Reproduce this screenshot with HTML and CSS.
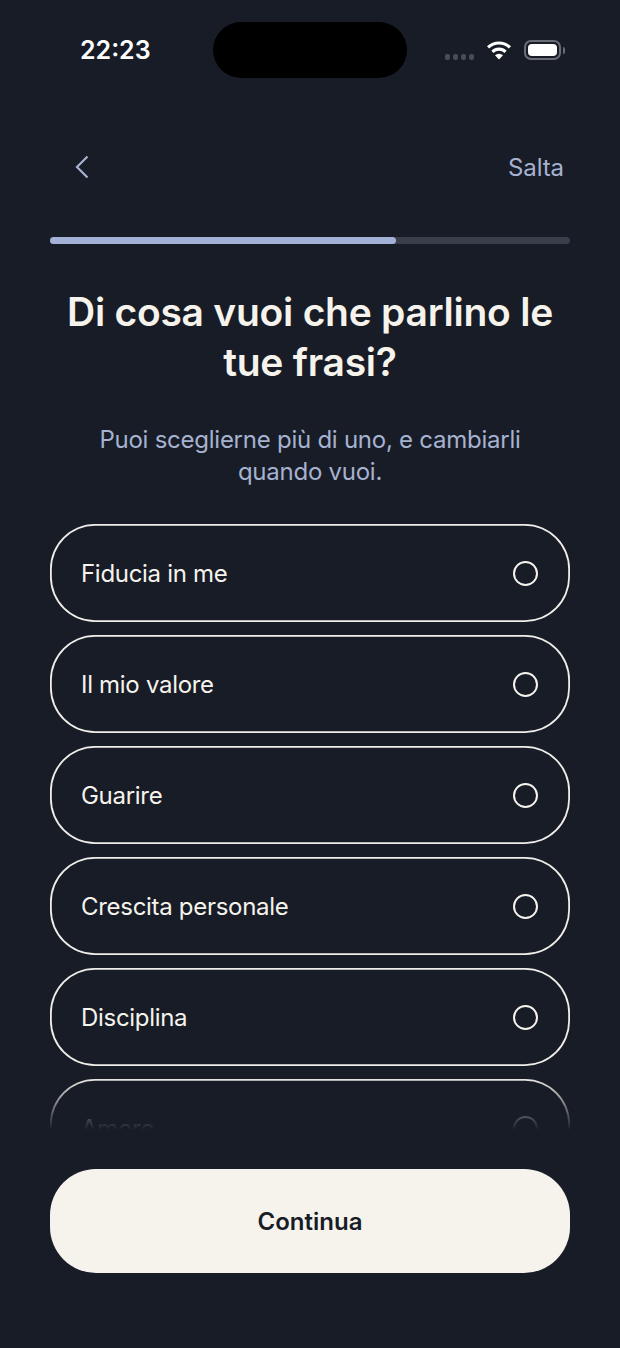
FILE: index.html
```html
<!DOCTYPE html>
<html lang="it">
  <head>
    <meta charset="UTF-8" />
    <meta name="viewport" content="width=device-width, initial-scale=1.0" />
    <title>Di cosa vuoi che parlino le tue frasi?</title>
    <link rel="stylesheet" href="styles.css">
  </head>
  <body>
    <div class="screen">
      <div class="status-bar">
        <span class="time">22:23</span>
        <div class="island"></div>
        <div class="status-icons">
          <div class="signal"><i></i><i></i><i></i><i></i></div>
          <svg class="wifi" width="26" height="20" viewBox="0 0 28 22">
            <path d="M2 8.2a17 17 0 0 1 24 0" fill="none" stroke="#fff" stroke-width="3.4" />
            <path d="M6.8 13a10.2 10.2 0 0 1 14.4 0" fill="none" stroke="#fff" stroke-width="3.4" />
            <path d="M14 21.5l-4.4-4.6a6.2 6.2 0 0 1 8.8 0z" fill="#fff" />
          </svg>
          <div class="battery"><div class="battery-level"></div></div>
          <div class="battery-cap"></div>
        </div>
      </div>

      <div class="nav">
        <button class="back-button" aria-label="Indietro">
          <svg width="14" height="24" viewBox="0 0 14 24">
            <path d="M12.5 1.5L2 12l10.5 10.5" fill="none" stroke="#a6b2d0" stroke-width="2.2" />
          </svg>
        </button>
        <span class="skip">Salta</span>
      </div>

      <div class="progress"><div class="progress-fill"></div></div>

      <h1 class="title">Di cosa vuoi che parlino le tue frasi?</h1>
      <p class="subtitle">Puoi sceglierne più di uno, e cambiarli quando vuoi.</p>

      <div class="options">
        <div class="option"><span>Fiducia in me</span><div class="radio"></div></div>
        <div class="option"><span>Il mio valore</span><div class="radio"></div></div>
        <div class="option"><span>Guarire</span><div class="radio"></div></div>
        <div class="option"><span>Crescita personale</span><div class="radio"></div></div>
        <div class="option"><span>Disciplina</span><div class="radio"></div></div>
        <div class="option"><span>Amore</span><div class="radio"></div></div>
        <div class="options-fade"></div>
      </div>

      <button class="continue-button">Continua</button>
    </div>
  </body>
</html>
```

FILE: styles.css
```css
* {
  box-sizing: border-box;
}

body {
  margin: 0;
  background-color: #171c27;
  font-family: Inter, "Noto Sans", sans-serif;
}

.screen {
  display: flex;
  flex-direction: column;
  width: 620px;
  height: 1348px;
  padding: 0 50px;
  overflow: hidden;
}

.status-bar {
  display: flex;
  align-items: center;
  height: 56px;
  margin-top: 22px;
  padding-left: 30px;
}

.time {
  flex: none;
  width: 133px;
  font-size: 25px;
  font-weight: 600;
  color: #fff;
}

.island {
  flex: none;
  width: 194px;
  height: 56px;
  margin-right: 38px;
  border-radius: 28px;
  background-color: #000;
}

.status-icons {
  display: flex;
  align-items: center;
}

.signal {
  display: flex;
  gap: 3px;
  margin: 14px 12px 0 0;
}

.signal i {
  width: 5px;
  height: 6px;
  border-radius: 2px;
  background-color: #484c56;
}

.wifi {
  margin-right: 12px;
}

.battery {
  width: 37px;
  height: 20px;
  padding: 2px;
  border: 2px solid #6a6d76;
  border-radius: 7px;
}

.battery-level {
  height: 100%;
  border-radius: 4px;
  background-color: #fff;
}

.battery-cap {
  width: 2px;
  height: 7px;
  margin-left: 2px;
  border-radius: 0 2px 2px 0;
  background-color: #6a6d76;
}

.nav {
  display: flex;
  align-items: center;
  justify-content: space-between;
  height: 40px;
  margin-top: 69px;
  padding: 0 6px 0 25px;
}

.back-button {
  display: flex;
  padding: 0;
  border: none;
  background: none;
}

.skip {
  font-size: 24px;
  letter-spacing: -0.1px;
  color: #a6b2d0;
}

.progress {
  height: 7px;
  margin-top: 50px;
  border-radius: 4px;
  background-color: #3a3e4a;
}

.progress-fill {
  width: 66.6%;
  height: 100%;
  border-radius: 4px;
  background-color: #a3b1d6;
}

.title {
  margin: 43px 0 0;
  font-size: 39px;
  font-weight: 600;
  line-height: 50px;
  letter-spacing: -0.25px;
  text-align: center;
  color: #f6f3ec;
}

.subtitle {
  width: 440px;
  margin: 37px auto 0;
  font-size: 24px;
  line-height: 32px;
  letter-spacing: -0.25px;
  text-align: center;
  color: #a6b2d0;
}

.options {
  position: relative;
  display: flex;
  flex-direction: column;
  gap: 13px;
  height: 609px;
  margin-top: 36px;
  overflow: hidden;
}

.option {
  display: flex;
  flex: none;
  align-items: center;
  justify-content: space-between;
  height: 98px;
  padding: 0 32px 0 31px;
  border-radius: 45px;
  box-shadow: inset 0 0 0 1.8px #f0eee9;
  font-size: 24px;
  letter-spacing: -0.3px;
  color: #f6f3ec;
}

.radio {
  width: 25px;
  height: 25px;
  border: 2px solid #f6f3ec;
  border-radius: 50%;
}

.options-fade {
  position: absolute;
  left: 0;
  right: 0;
  bottom: 0;
  height: 56px;
  background: linear-gradient(to bottom, rgba(23, 28, 39, 0), #171c27 95%);
}

.continue-button {
  flex: none;
  height: 104px;
  margin-top: 36px;
  border: none;
  border-radius: 46px;
  background-color: #f6f3ec;
  font-family: inherit;
  font-size: 24px;
  font-weight: 600;
  color: #171c27;
}
```
